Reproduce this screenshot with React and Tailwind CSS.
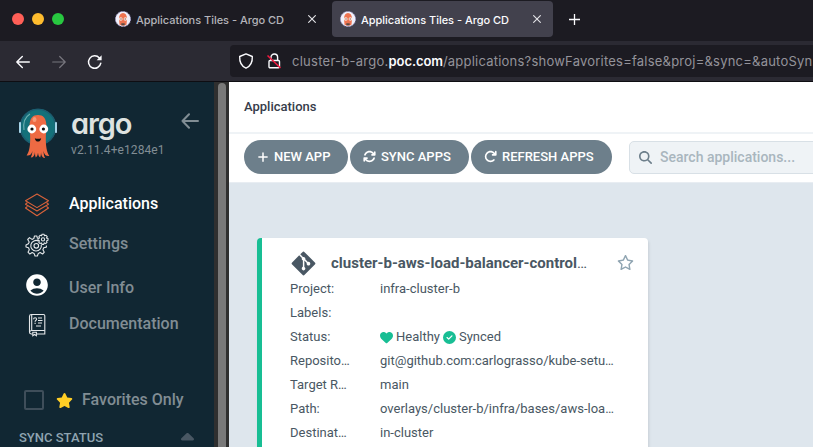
import React from "react";
import {
  FaPlus, FaArrowsRotate, FaArrowRotateRight, FaMagnifyingGlass, FaStar, FaRegStar,
  FaGitAlt, FaHeart, FaCircleCheck, FaCaretUp,
} from "react-icons/fa6";
import { MdAccountCircle } from "react-icons/md";

function Octopus({ className }) {
  return (
    <svg className={className} viewBox="0 0 38 50">
      <circle cx="19" cy="19" r="18.3" fill="#14717a" />
      <circle cx="19" cy="19" r="17.6" fill="none" stroke="#1d5c70" strokeWidth="1.4" />
      <rect x="0" y="14" width="2" height="11" rx="0.8" fill="#a5d3e8" />
      <rect x="36" y="14" width="2" height="11" rx="0.8" fill="#a5d3e8" />
      <path d="M5 22C4 15 6 9 11 6" fill="none" stroke="#6fb0b2" strokeWidth="1.1" />
      <path
        d="M10.6 18C10.6 10 14 7 19 7s8.400 3 8.400 11c0 5-.6 8-.6 13 0 6 .8 13 3.500 17-3 .3-5-1-5.800-5 .2 3 .5 5 1.500 7-2.600 0-3.800-2.500-4-6 0 2.500-.3 4-.8 5.500-1.600-1-2-3-2.200-5-.2 2-.8 4-2.200 5-.6-1.500-.8-3-.8-5.500-.3 3.500-1.600 5.500-4.200 5.500 1-2 1.400-4 1.600-6.500-.8 3.500-2.800 5-5.800 4.500 3-4 3.600-11 3.600-17C11.200 26 10.600 23 10.600 18z"
        fill="#ee6a43"
      />
      <ellipse cx="15.500" cy="11.500" rx="2" ry="2.500" fill="#f59a78" />
      <circle cx="12.800" cy="21" r="4.400" fill="#fff" />
      <circle cx="24.800" cy="21" r="4.400" fill="#fff" />
      <circle cx="13" cy="21" r="1.600" fill="#111" />
      <circle cx="24.400" cy="21" r="1.600" fill="#111" />
      <path d="M15.800 30.200c2 .8 4.400.8 6.400 0-.4 2.400-1.600 3.400-3.200 3.400s-2.800-1-3.200-3.400z" fill="#111" />
    </svg>
  );
}

function Favicon() {
  return (
    <svg className="h-4 w-4 shrink-0" viewBox="0 0 16 16">
      <circle cx="8" cy="8" r="7.600" fill="#f1f0fa" stroke="#a9a5d8" strokeWidth="0.8" strokeDasharray="2 1" />
      <path d="M4 8c0-4 1.500-6 4-6s4 2 4 6l-.5 5.500c-1 1.500-6 1.500-7 0z" fill="#ee7350" />
      <circle cx="5.800" cy="8" r="1.800" fill="#fbe9e2" />
      <circle cx="10.400" cy="8" r="1.800" fill="#fbe9e2" />
      <circle cx="6" cy="8" r="0.700" fill="#8b5545" />
      <circle cx="10.200" cy="8" r="0.700" fill="#8b5545" />
      <path d="M6.300 12.300h3.400v2H6.300z" fill="#5b4a45" />
    </svg>
  );
}

function Close() {
  return (
    <svg className="h-2 w-2 shrink-0" viewBox="0 0 8 8" fill="none" stroke="#e4e4e8" strokeWidth="1.100">
      <path d="M.3.3l7.400 7.400M7.700.3L.3 7.700" />
    </svg>
  );
}

function BrowserChrome() {
  return (
    <header className="shrink-0 font-['Inter',sans-serif]">
      <div className="flex h-[41px] items-center bg-[#1c1b22]">
        <div className="flex w-[115px] gap-2 pb-[3px] pl-3">
          <span className="h-3 w-3 rounded-full bg-[#ff5f57]" />
          <span className="h-3 w-3 rounded-full bg-[#febc2e]" />
          <span className="h-3 w-3 rounded-full bg-[#28c840]" />
        </div>
        <div className="flex w-[217px] items-center pb-[3px]">
          <Favicon />
          <span className="ml-[5px] w-[172px] whitespace-nowrap pt-[2px] text-[11px] font-medium leading-4 tracking-[-0.020px] text-[#b4b4ba]">
            Applications Tiles - Argo CD
          </span>
          <Close />
        </div>
        <div className="mb-[3px] flex h-9 w-[221px] items-center rounded bg-[#42414d] pl-2">
          <Favicon />
          <span className="ml-[5px] w-[172px] whitespace-nowrap pt-[2px] text-[11px] font-medium leading-4 tracking-[-0.020px] text-[#fbfbfe]">
            Applications Tiles - Argo CD
          </span>
          <Close />
        </div>
        <svg className="mb-[2px] ml-4 h-[11px] w-[11px]" viewBox="0 0 11 11" fill="none" stroke="#fbfbfe" strokeWidth="1.300">
          <path d="M5.500 0v11M0 5.500h11" />
        </svg>
      </div>
      <div className="flex h-[41px] items-center border-b border-[#0e0d12] bg-[#2b2a33]">
        <svg className="ml-4 mt-px h-[14px] w-[14px]" viewBox="0 0 14 14" fill="none" stroke="#fbfbfe" strokeWidth="1.400" strokeLinecap="round" strokeLinejoin="round">
          <path d="M13.300 7H.8M6.300 1.500L.8 7l5.500 5.500" />
        </svg>
        <svg className="ml-[22px] mt-px h-[14px] w-[14px]" viewBox="0 0 14 14" fill="none" stroke="#77767e" strokeWidth="1.200" strokeLinecap="round" strokeLinejoin="round">
          <path d="M.7 7h12.500M7.700 1.500L13.200 7l-5.500 5.500" />
        </svg>
        <svg className="ml-[21px] mt-px h-4 w-4" viewBox="0 0 16 16" fill="none" stroke="#fbfbfe" strokeWidth="1.500" strokeLinecap="round">
          <path d="M13.800 9.200A6.200 6.200 0 1 1 12.400 4" />
          <path d="M14.600 1.200v5h-5z" fill="#fbfbfe" stroke="none" />
        </svg>
        <div className="ml-[127px] flex h-8 flex-1 items-center overflow-hidden rounded-l bg-[#1c1b22] pl-2">
          <svg className="h-4 w-4 shrink-0" viewBox="0 0 16 16" fill="none" stroke="#fbfbfe" strokeWidth="1.400" strokeLinejoin="round">
            <path d="M8 .9L14.300 3.500C14.600 9 12.400 13.200 8 15.200 3.600 13.200 1.400 9 1.700 3.500z" />
          </svg>
          <svg className="ml-3 h-4 w-4 shrink-0" viewBox="0 0 16 16" fill="none" stroke="#fbfbfe" strokeWidth="1.400">
            <path d="M5 7.500V4.300a3.300 3.300 0 0 1 6.600 0v3.200" />
            <rect x="3" y="7.500" width="10.500" height="7.300" rx="1" />
            <path d="M1.500 2.500l13 12.500" stroke="#f0193f" strokeWidth="1.600" />
          </svg>
          <span className="ml-[10px] whitespace-nowrap text-[13px] leading-5 tracking-[0.220px] text-[#94939a]">
            <span className="tracking-[0.260px]">cluster-b-argo.</span><span className="font-semibold tracking-[-0.080px] text-[#fbfbfe]">poc.com</span>/applications?showFavorites=false&amp;proj=&amp;sync=&amp;autoSyn
          </span>
        </div>
      </div>
    </header>
  );
}

function LayersIcon() {
  return (
    <svg className="h-6 w-6" viewBox="0 0 24 24" fill="none" stroke="#d9623a" strokeWidth="1.100" strokeLinejoin="round">
      <path d="M12 1l11.500 6.800L12 14.600.5 7.800z" />
      <path d="M2.500 9.500L.5 11.200 12 18l11.500-6.800-2-1.700" />
      <path d="M2.500 13.300l-2 1.700L12 22.800 23.500 15l-2-1.700" />
    </svg>
  );
}

function GearsIcon() {
  return (
    <svg className="h-6 w-6" viewBox="0 0 24 24" fill="none" stroke="#e5e8ea" strokeWidth="1.100" strokeLinejoin="round">
      <path d="M12.500 5.500L11.800 3H9.500L8.800 5.600 7 6.400 4.500 4.600 2.700 6.500 4.200 9l-.8 1.800L1 12v2l2.500.8.800 1.900L3 19.200 4.800 21l2.400-1.400 1.900.8.900 2.600h2.400l.9-2.600 1.800-.8 2.500 1.400 1.700-1.800-1.400-2.500.8-1.900 2.700-.7v-1.600" />
      <circle cx="11.300" cy="12.800" r="2.300" />
      <path d="M13.500 8a5.300 5.300 0 1 0 2.800 3.700" />
      <path d="M16.600 2.800L17 1.200h2l.5 1.600 1.500-.5 1.200 1.400-.8 1.300 1.600.6v1.700l-1.600.6.600 1.500-1.300 1.200-1.400-.7-.6 1.500h-1.700l-.6-1.500-1.500.6-1.200-1.300.7-1.400-1.400-.6V5.600l1.500-.6-.6-1.400L15.100 2.300z" />
      <circle cx="18" cy="6.400" r="1.600" />
    </svg>
  );
}

function DocsIcon() {
  return (
    <svg className="h-6 w-6" viewBox="0 0 24 24" fill="none" stroke="#e5e8ea" strokeWidth="1.100">
      <path d="M7.500 21H6.200A1.900 1.900 0 0 1 4.500 19V3.200C4.500 2 5.300 1.500 6.500 1.500h12c.8 0 1.300.5 1.300 1.300v18.200H12" />
      <path d="M4.700 19c.2-1 .8-1.500 1.800-1.500h13.300M6.700 1.500v16M7.800 19.200v3.500l1.800-1.200 1.800 1.200v-3.500z" />
      <path d="M13 5h4M13 7.500h4.500M13 10h4M11 13h5M8.600 6.200c0-2 3-2 3 0 0 1.100-1.500 1.100-1.500 2.500M10.100 9.800v1.100" />
    </svg>
  );
}

function NavItem({ icon, label, active, low }) {
  return (
    <div className="flex h-10 items-center pl-[25px]">
      <span className="flex w-11 shrink-0">{icon}</span>
      <span className={`text-[16px] font-medium leading-5 ${low ? "pt-[5px]" : "pb-[3px]"} ${active ? "text-white" : "text-[#818d94]"}`}>{label}</span>
    </div>
  );
}

function Sidebar() {
  return (
    <aside className="flex w-[214px] shrink-0 flex-col bg-[#112733]">
      <div className="flex h-[103px] shrink-0 pl-[19px] pt-[26px]">
        <Octopus className="h-[50px] w-[38px] shrink-0" />
        <div className="ml-[14px] w-[110px]">
          <div className="h-[33px] text-[29px] font-semibold leading-[31px] tracking-[-1.100px] text-[#dee2e0] font-['Inter',sans-serif] [font-feature-settings:'cv11']">argo</div>
          <div className="whitespace-nowrap text-[12px] leading-[18px] tracking-[0.080px] text-[#818d94]">v2.11.4+e1284e1</div>
        </div>
        <svg className="mt-[5px] h-4 w-[18px] shrink-0" viewBox="0 0 18 16" fill="none" stroke="#818d94" strokeWidth="2" strokeLinecap="round" strokeLinejoin="round">
          <path d="M17 8H1.500M8 1.200L1.500 8 8 14.800" />
        </svg>
      </div>
      <nav className="shrink-0">
        <NavItem active icon={<LayersIcon />} label="Applications" />
        <NavItem icon={<GearsIcon />} label="Settings" />
        <NavItem low icon={<MdAccountCircle className="-ml-px h-[26px] w-[26px] text-white" />} label="User Info" />
        <NavItem icon={<DocsIcon />} label="Documentation" />
      </nav>
      <div className="mt-[42px] flex h-[26px] shrink-0 items-center pl-6">
        <span className="h-5 w-5 rounded-[2px] border-2 border-[#3f4e5a]" />
        <FaStar className="ml-3 h-[17px] w-[17px] text-[#ffce25]" />
        <span className="ml-[9px] text-[16px] font-medium leading-5 text-[#818d94]">Favorites Only</span>
      </div>
      <div className="mt-[15px] flex h-5 shrink-0 items-center justify-between pl-[19px] pr-5">
        <span className="text-[13px] font-medium leading-5 text-[#8fa4b1]">SYNC STATUS</span>
        <FaCaretUp className="h-5 w-[13px] text-[#495763]" preserveAspectRatio="none" />
      </div>
    </aside>
  );
}

function PillButton({ icon, label, width }) {
  return (
    <button className={`flex h-[34px] shrink-0 items-center whitespace-nowrap rounded-full bg-[#6d7f8b] pb-px pl-[13px] text-[13px] font-medium text-white ${width}`}>
      {icon}
      <span>{label}</span>
    </button>
  );
}

function Row({ label, children }) {
  return (
    <div className="flex h-6 items-center text-[13px] leading-6 text-[#495763]">
      <span className="w-[90px] shrink-0">{label}</span>
      <span className="flex items-center whitespace-nowrap">{children}</span>
    </div>
  );
}

export default function App() {
  return (
    <div className="flex h-[447px] w-[813px] flex-col overflow-hidden bg-[#dee6ed] font-['Roboto',sans-serif]">
      <BrowserChrome />
      <div className="flex min-h-0 flex-1">
        <Sidebar />
        <div className="w-[15px] shrink-0 bg-[#2f2f2f] pl-1 pt-px">
          <div className="h-full w-2 rounded-t-full bg-[#797979]" />
        </div>
        <main className="min-w-0 flex-1 overflow-hidden">
          <div className="flex h-[52px] items-center border-b-2 border-[#eff3f6] bg-white pl-[15px] text-[13px] font-medium text-[#363c4a]">
            Applications
          </div>
          <div className="flex h-[49px] items-start gap-[2px] border-b border-[#e8edf2] bg-white pl-[15px] pt-[6px]">
            <PillButton width="w-[104px]" icon={<FaPlus className="mr-[5px] h-3 w-3" />} label="NEW APP" />
            <PillButton width="w-[119px]" icon={<FaArrowsRotate className="mr-[5px] h-[13px] w-[13px]" />} label="SYNC APPS" />
            <PillButton width="w-[141px]" icon={<FaArrowRotateRight className="mr-[5px] h-[13px] w-[13px]" />} label="REFRESH APPS" />
            <div className="ml-[15px] mt-px flex h-[33px] w-[240px] shrink-0 items-center rounded-[5px] border border-[#d8e0e6] bg-[#eff3f6] pl-[9px]">
              <FaMagnifyingGlass className="h-[13px] w-[13px] text-[#6d7f8b]" />
              <span className="ml-2 text-[14px] font-medium text-[#a9b6be]">Search applications...</span>
            </div>
          </div>
          <div className="pl-7 pt-[55px]">
            <section className="h-[260px] w-[391px] rounded border-l-[5px] border-[#18be94] bg-white pl-7 pt-[13px] shadow-[1px_2px_3px_rgba(0,0,0,0.1)]">
              <div className="mb-px flex h-[25px] items-center">
                <FaGitAlt className="h-[27px] w-[27px] text-[#495763]" />
                <span className="ml-[14px] w-[286px] whitespace-nowrap text-[15px] font-bold text-[#495763]">
                  cluster-b-aws-load-balancer-control<span className="font-normal">…</span>
                </span>
                <FaRegStar className="mb-[2px] h-[17px] w-[17px] text-[#8fa4b1]" />
              </div>
              <Row label="Project:">infra-cluster-b</Row>
              <Row label="Labels:" />
              <Row label="Status:">
                <FaHeart className="mr-[3px] h-[13px] w-[13px] text-[#18be94]" />
                <span>Healthy</span>
                <FaCircleCheck className="ml-[3px] mr-[3px] h-[13px] w-[13px] text-[#18be94]" />
                <span>Synced</span>
              </Row>
              <Row label="Reposito…">git@github.com:carlograsso/kube-setu…</Row>
              <Row label="Target R…">main</Row>
              <Row label="Path:">overlays/cluster-b/infra/bases/aws-loa…</Row>
              <Row label="Destinat…">in-cluster</Row>
            </section>
          </div>
        </main>
      </div>
    </div>
  );
}
